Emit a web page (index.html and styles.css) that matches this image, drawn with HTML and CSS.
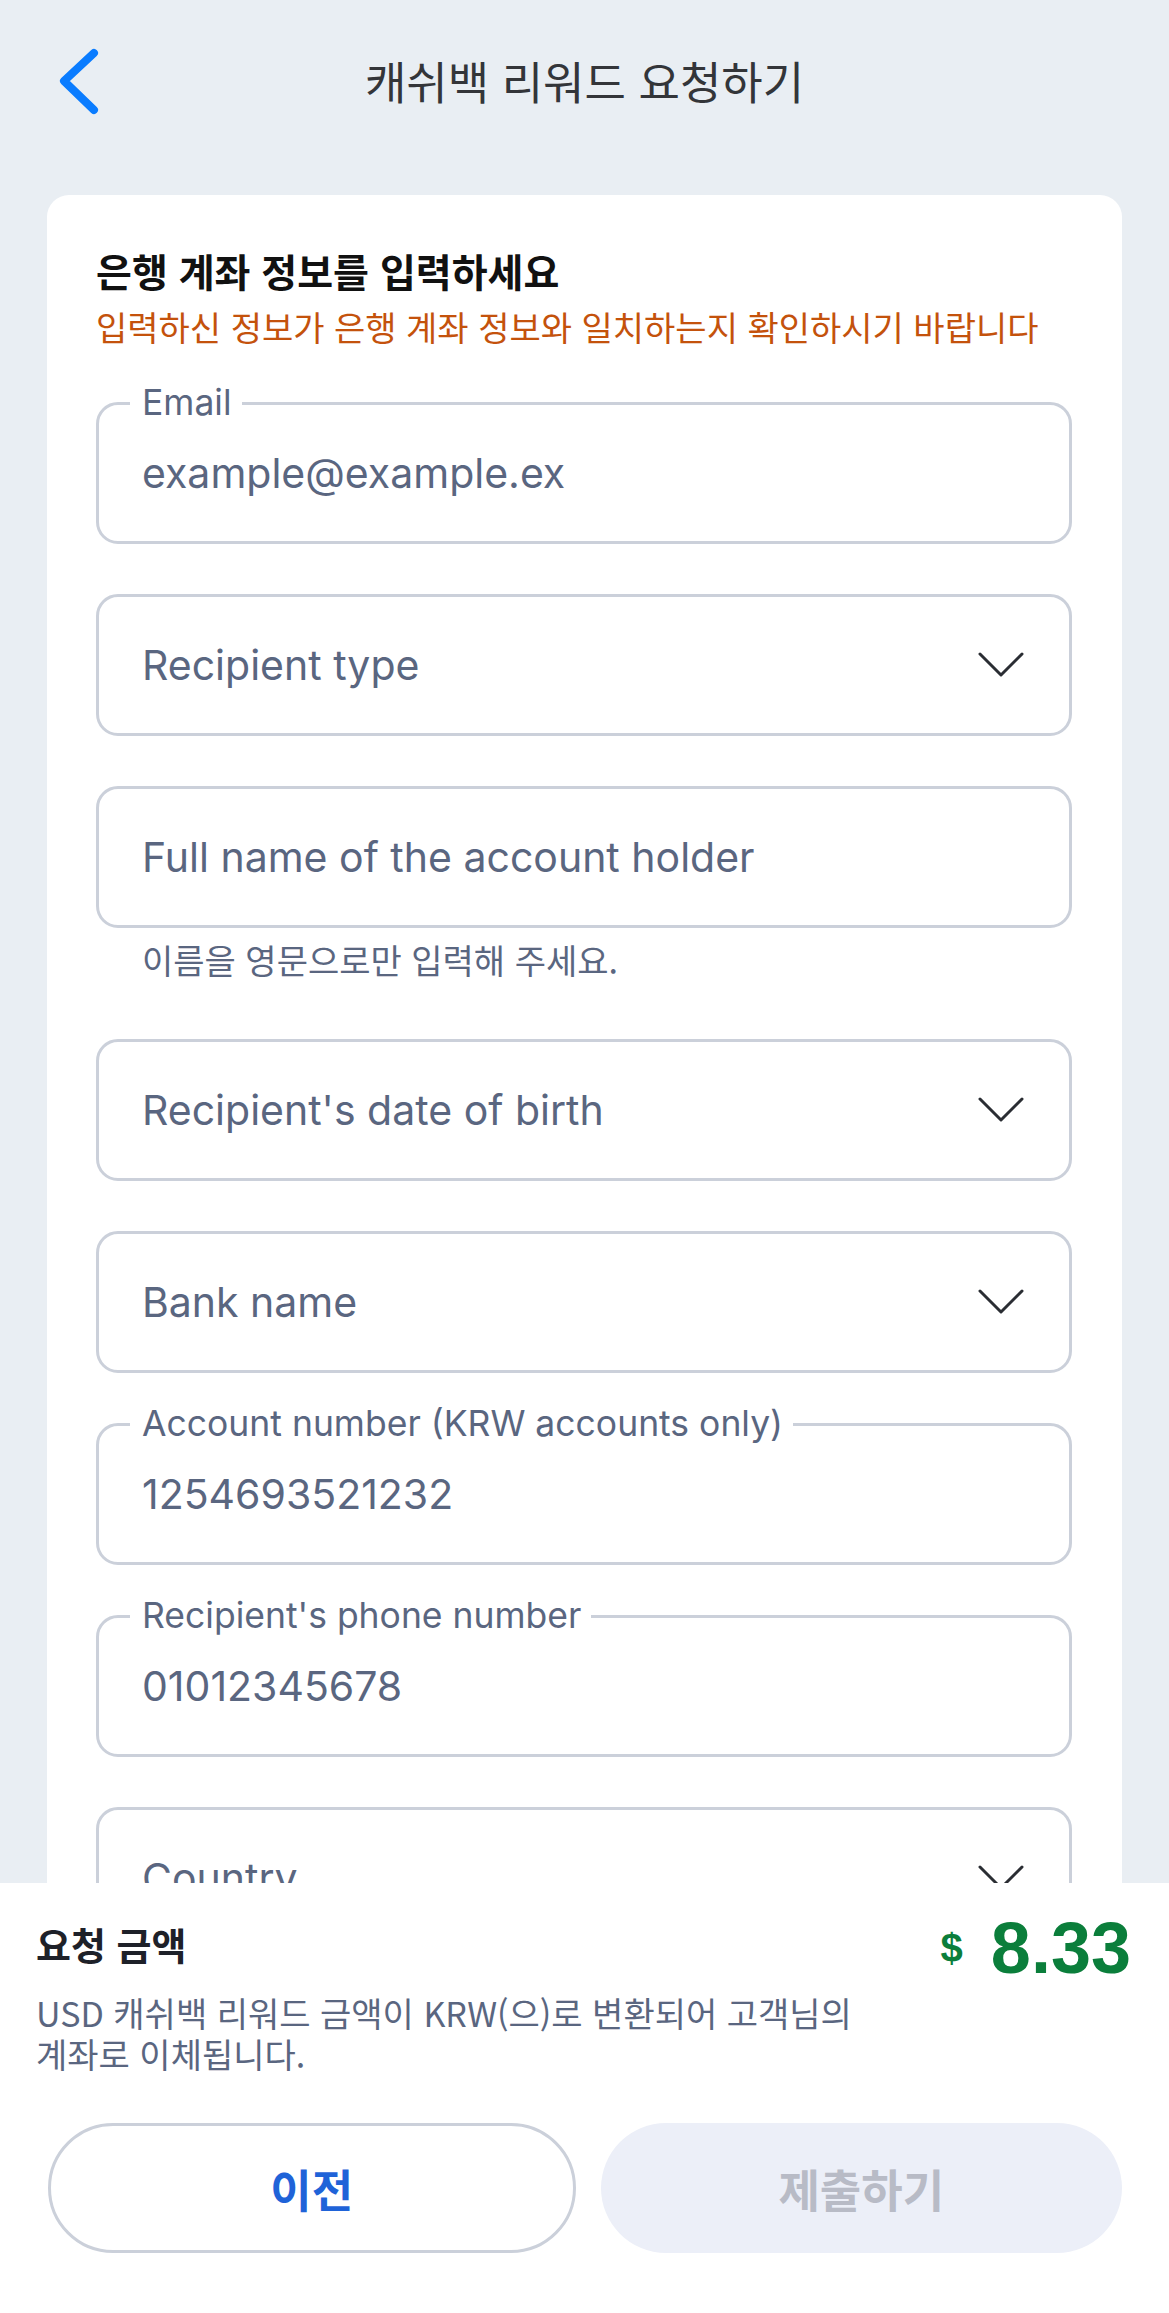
FILE: index.html
```html
<!DOCTYPE html>
<html lang="ko">
<head>
<meta charset="utf-8">
<title>캐쉬백 리워드 요청하기</title>
<link rel="stylesheet" href="styles.css">
</head>
<body>
<header class="topbar">
  <button class="back" aria-label="뒤로">
    <svg width="44" height="70" viewBox="0 0 44 70"><path d="M37 7 L7 35 L37 64" fill="none" stroke="#0a7cff" stroke-width="8" stroke-linecap="round" stroke-linejoin="round"/></svg>
  </button>
  <h1 class="title">캐쉬백 리워드 요청하기</h1>
  <span></span>
</header>

<main class="card">
  <h2 class="card-title">은행 계좌 정보를 입력하세요</h2>
  <p class="card-warn">입력하신 정보가 은행 계좌 정보와 일치하는지 확인하시기 바랍니다</p>

  <div class="fields">
    <div class="field">
      <span class="label">Email</span>
      <span class="value">example@example.ex</span>
    </div>
    <div class="field">
      <span class="value">Recipient type</span>
      <svg class="caret" width="48" height="28" viewBox="0 0 48 28"><path d="M3 3 L24 24 L45 3" fill="none" stroke="#2a2d33" stroke-width="3" stroke-linecap="round" stroke-linejoin="round"/></svg>
    </div>
    <div class="group">
      <div class="field">
        <span class="value">Full name of the account holder</span>
      </div>
      <p class="helper">이름을 영문으로만 입력해 주세요.</p>
    </div>
    <div class="field">
      <span class="value">Recipient's date of birth</span>
      <svg class="caret" width="48" height="28" viewBox="0 0 48 28"><path d="M3 3 L24 24 L45 3" fill="none" stroke="#2a2d33" stroke-width="3" stroke-linecap="round" stroke-linejoin="round"/></svg>
    </div>
    <div class="field">
      <span class="value">Bank name</span>
      <svg class="caret" width="48" height="28" viewBox="0 0 48 28"><path d="M3 3 L24 24 L45 3" fill="none" stroke="#2a2d33" stroke-width="3" stroke-linecap="round" stroke-linejoin="round"/></svg>
    </div>
    <div class="field">
      <span class="label">Account number (KRW accounts only)</span>
      <span class="value">1254693521232</span>
    </div>
    <div class="field">
      <span class="label">Recipient's phone number</span>
      <span class="value">01012345678</span>
    </div>
    <div class="field">
      <span class="value">Country</span>
      <svg class="caret" width="48" height="28" viewBox="0 0 48 28"><path d="M3 3 L24 24 L45 3" fill="none" stroke="#2a2d33" stroke-width="3" stroke-linecap="round" stroke-linejoin="round"/></svg>
    </div>
  </div>
</main>

<footer class="sheet">
  <div class="amount-row">
    <h3 class="amount-title">요청 금액</h3>
    <div class="amount"><span class="cur">$</span><span class="num">8.33</span></div>
  </div>
  <p class="amount-desc">USD 캐쉬백 리워드 금액이 KRW(으)로 변환되어 고객님의 계좌로 이체됩니다.</p>
  <div class="actions">
    <button class="btn btn-prev">이전</button>
    <button class="btn btn-submit" disabled>제출하기</button>
  </div>
</footer>
</body>
</html>
```

FILE: styles.css
```css
* { box-sizing: border-box; }

html, body {
  margin: 0;
  padding: 0;
  width: 1169px;
  height: 2313px;
  overflow: hidden;
}

body {
  background: #e9eef3;
  font-family: "Inter", "Noto Sans CJK KR", sans-serif;
  color: #5a6680;
}

.topbar {
  height: 162px;
  display: grid;
  grid-template-columns: 1fr auto 1fr;
  align-items: center;
}

.back {
  justify-self: start;
  margin-left: 57px;
  padding: 0;
  border: 0;
  background: none;
  display: flex;
  width: 44px;
  height: 70px;
}

.title {
  margin: 0;
  font-family: "Noto Sans CJK KR", sans-serif;
  font-weight: 400;
  font-size: 45px;
  line-height: 58px;
  color: #333539;
}

.card {
  margin: 33px 47px 0;
  background: #fff;
  border-radius: 22px;
  padding: 50px 50px 400px 49px;
}

.card-title {
  margin: 0;
  font-family: "Noto Sans CJK KR", sans-serif;
  font-weight: 700;
  font-size: 39px;
  line-height: 50px;
  color: #111;
}

.card-warn {
  margin: 9px 0 0;
  font-family: "Noto Sans CJK KR", sans-serif;
  font-size: 34px;
  line-height: 46px;
  color: #c4520c;
}

.fields {
  margin-top: 52px;
  display: flex;
  flex-direction: column;
  gap: 50px;
}

.field {
  position: relative;
  height: 142px;
  border: 3px solid #cbd0da;
  border-radius: 22px;
  display: flex;
  align-items: center;
  justify-content: space-between;
  padding: 0 44px 0 43px;
}

.label {
  position: absolute;
  top: -22px;
  left: 31px;
  padding: 0 10px 0 12px;
  background: #fff;
  font-size: 35.5px;
  line-height: 40px;
  color: #5a6680;
}

.value {
  font-size: 41px;
  line-height: 50px;
  color: #5a6680;
}

.caret { flex: none; }

.helper {
  margin: 11px 0 8px 46px;
  font-family: "Noto Sans CJK KR", sans-serif;
  font-size: 34px;
  line-height: 42px;
  color: #5a6680;
}

.sheet {
  position: fixed;
  left: 0;
  right: 0;
  bottom: 0;
  height: 430px;
  background: #fff;
  padding: 30px 38px 0 36px;
}

.amount-row {
  height: 70px;
  display: flex;
  align-items: center;
  justify-content: space-between;
}

.amount-title {
  margin: 0 0 8px;
  font-family: "Noto Sans CJK KR", sans-serif;
  font-weight: 700;
  font-size: 38px;
  line-height: 50px;
  color: #1e2129;
}

.amount {
  display: flex;
  align-items: center;
  gap: 28px;
  color: #0b7e3b;
  font-family: "Liberation Sans", Arial, sans-serif;
  font-weight: 700;
}

.cur { font-size: 40px; line-height: 50px; }
.num { font-size: 72px; line-height: 70px; }

.amount-desc {
  margin: 9px 0 0;
  max-width: 880px;
  word-break: keep-all;
  font-family: "Noto Sans CJK KR", sans-serif;
  font-size: 34px;
  line-height: 41px;
  color: #5a6680;
}

.actions {
  margin: 49px 9px 0 12px;
  display: flex;
  gap: 25px;
}

.btn {
  flex: 1;
  height: 130px;
  border-radius: 65px;
  font-family: "Noto Sans CJK KR", sans-serif;
  font-weight: 700;
  font-size: 45px;
}

.btn-prev {
  background: #fff;
  border: 3px solid #cbd0da;
  color: #1f63d8;
}

.btn-submit {
  background: #eceff8;
  border: 0;
  color: #b8bbc6;
}
```
